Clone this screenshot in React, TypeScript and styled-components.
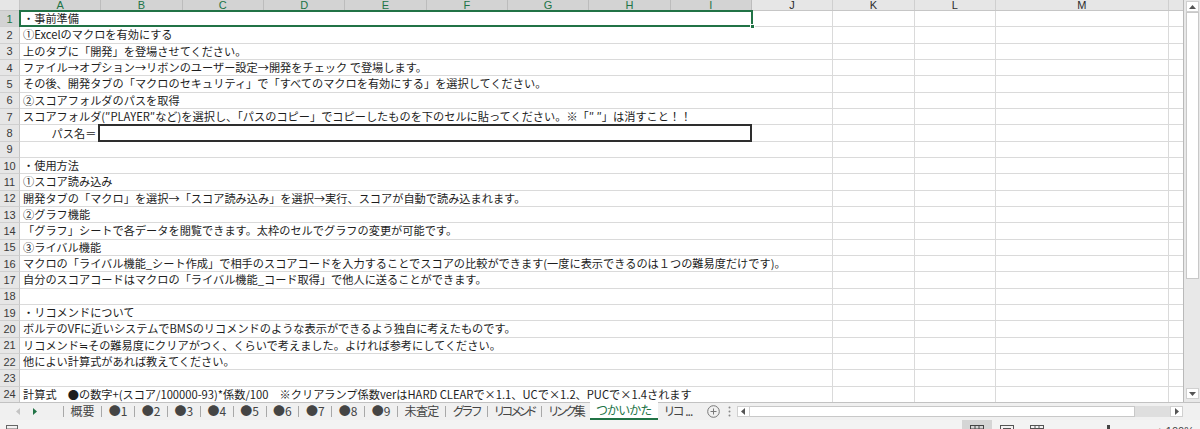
import { Fragment } from "react";
import styled, { createGlobalStyle } from "styled-components";

const GlobalStyle = createGlobalStyle`
  html, body {
    margin: 0;
    padding: 0;
    overflow: hidden;
    background: #ffffff;
  }
  body {
    font-family: "Noto Sans CJK JP", "Noto Sans", sans-serif;
  }
`;

const ROW_H = 16.33;
const COL_W = 81.33;
const GREEN = "#217346";

type RowData = { text?: string; path?: boolean };

const rows: RowData[] = [
  { text: "・事前準備" },
  { text: "①Excelのマクロを有効にする" },
  { text: "上のタブに「開発」を登場させてください。" },
  { text: "ファイル→オプション→リボンのユーザー設定→開発をチェック で登場します。" },
  { text: "その後、開発タブの「マクロのセキュリティ」で「すべてのマクロを有効にする」を選択してください。" },
  { text: "②スコアフォルダのパスを取得" },
  {
    text: "スコアフォルダ(″PLAYER″など)を選択し、「パスのコピー」でコピーしたものを下のセルに貼ってください。※「″ ″」は消すこと！！",
  },
  { path: true },
  {},
  { text: "・使用方法" },
  { text: "①スコア読み込み" },
  { text: "開発タブの「マクロ」を選択→「スコア読み込み」を選択→実行、スコアが自動で読み込まれます。" },
  { text: "②グラフ機能" },
  { text: "「グラフ」シートで各データを閲覧できます。太枠のセルでグラフの変更が可能です。" },
  { text: "③ライバル機能" },
  {
    text: "マクロの「ライバル機能_シート作成」で相手のスコアコードを入力することでスコアの比較ができます(一度に表示できるのは１つの難易度だけです)。",
  },
  { text: "自分のスコアコードはマクロの「ライバル機能_コード取得」で他人に送ることができます。" },
  {},
  { text: "・リコメンドについて" },
  { text: "ボルテのVFに近いシステムでBMSのリコメンドのような表示ができるよう独自に考えたものです。" },
  { text: "リコメンド≒その難易度にクリアがつく、くらいで考えました。よければ参考にしてください。" },
  { text: "他によい計算式があれば教えてください。" },
  {},
  {
    text: "計算式　●の数字+(スコア/100000-93)*係数/100　※クリアランプ係数verはHARD CLEARで×1.1、UCで×1.2、PUCで×1.4されます",
  },
  {},
];

const mainCols = ["A", "B", "C", "D", "E", "F", "G", "H", "I"];
const sideCols = [
  { name: "J", width: COL_W },
  { name: "K", width: COL_W },
  { name: "L", width: COL_W },
  { name: "M", width: 173 },
  { name: "", width: 15 },
];

const tabs = [
  { label: "概要" },
  { label: "●1" },
  { label: "●2" },
  { label: "●3" },
  { label: "●4" },
  { label: "●5" },
  { label: "●6" },
  { label: "●7" },
  { label: "●8" },
  { label: "●9" },
  { label: "未査定", ls: -0.6 },
  { label: "グラフ", kana: true, ls: -1.3 },
  { label: "リコメンド", kana: true, ls: -2.4 },
  { label: "リンク集", kana: true, ls: -2 },
];

const Window = styled.div`
  width: 1200px;
  height: 429px;
  display: flex;
  flex-direction: column;
  overflow: hidden;
  background: #ffffff;
`;

const Main = styled.div`
  display: flex;
  height: 403px;
  flex: none;
  border-bottom: 1px solid #c2c2c2;
  box-sizing: border-box;
`;

const Sheet = styled.div`
  width: 1184px;
  flex: none;
  display: flex;
  flex-direction: column;
  overflow: hidden;
  border-right: 1px solid #b9b9b9;
  box-sizing: border-box;
`;

const HeaderRow = styled.div`
  display: flex;
  height: 11px;
  flex: none;
  background: #e6e6e6;
  border-bottom: 1px solid #c6c6c6;
  box-sizing: border-box;
`;

const Corner = styled.div`
  width: 20px;
  flex: none;
  border-right: 1px solid #c6c6c6;
  box-sizing: border-box;
`;

const ColHeader = styled.div<{ $w: number; $sel?: boolean }>`
  width: ${(p) => p.$w}px;
  flex: none;
  box-sizing: border-box;
  border-right: 1px solid ${(p) => (p.$sel ? "#bcbcbc" : "#cfcfcf")};
  background: ${(p) => (p.$sel ? "#d3d3d3" : "#e6e6e6")};
  color: ${(p) => (p.$sel ? GREEN : "#2b2b2b")};
  font-family: "Liberation Sans", Arial, sans-serif;
  font-size: 11px;
  line-height: 10px;
  text-align: center;
  overflow: hidden;
`;

const Row = styled.div`
  display: flex;
  height: ${ROW_H}px;
  flex: none;
`;

const RowHeader = styled.div<{ $sel?: boolean }>`
  width: 20px;
  flex: none;
  box-sizing: border-box;
  display: flex;
  align-items: center;
  justify-content: center;
  background: ${(p) => (p.$sel ? "#d3d3d3" : "#e6e6e6")};
  color: ${(p) => (p.$sel ? GREEN : "#3a3a3a")};
  border-right: 1px solid #c6c6c6;
  border-bottom: 1px solid #d0d0d0;
  font-family: "Liberation Sans", Arial, sans-serif;
  font-size: 11px;
`;

const MainCell = styled.div<{ $sel?: boolean; $flush?: boolean }>`
  width: ${COL_W * 9}px;
  flex: none;
  box-sizing: border-box;
  display: flex;
  align-items: center;
  padding-left: ${(p) => (p.$flush ? 0 : 3)}px;
  border-bottom: 1px solid #dadada;
  position: relative;
  ${(p) =>
    p.$sel &&
    `
    &::after {
      content: "";
      position: absolute;
      left: -1px;
      top: -1px;
      right: -1px;
      bottom: -1px;
      border: 2px solid ${GREEN};
      z-index: 3;
    }
    &::before {
      content: "";
      position: absolute;
      right: -3px;
      bottom: -3px;
      width: 5px;
      height: 5px;
      background: ${GREEN};
      border: 1px solid #ffffff;
      box-sizing: border-box;
      z-index: 4;
    }
  `}
`;

const CellText = styled.span`
  position: relative;
  z-index: 2;
  font-size: 11.2px;
  line-height: 13px;
  color: #1d1d1d;
  white-space: nowrap;
  background: #ffffff;
  padding-right: 1px;
`;

const PathLabel = styled.div`
  width: ${COL_W - 3}px;
  flex: none;
  text-align: right;
  padding-right: 2px;
  box-sizing: border-box;
  font-size: 11.2px;
  color: #1d1d1d;
  white-space: nowrap;
`;

const PathBox = styled.div`
  flex: 1;
  align-self: stretch;
  margin-top: -1px;
  margin-bottom: -1px;
  border: 2px solid #2e2e2e;
  background: #ffffff;
  position: relative;
  z-index: 2;
`;

const Cell = styled.div<{ $w: number }>`
  width: ${(p) => p.$w}px;
  flex: none;
  box-sizing: border-box;
  border-right: 1px solid #dadada;
  border-bottom: 1px solid #dadada;
`;

const VScroll = styled.div`
  flex: 1;
  display: flex;
  flex-direction: column;
  align-items: center;
  background: #e8e8e8;
  padding: 1px 0 3px;
  box-sizing: border-box;
`;

const ScrollBtn = styled.div`
  width: 13px;
  height: 11px;
  flex: none;
  display: flex;
  align-items: center;
  justify-content: center;
  background: #ffffff;
  border: 1px solid #d0d0d0;
  box-sizing: border-box;
`;

const VThumb = styled.div`
  width: 13px;
  height: 267px;
  flex: none;
  background: #ffffff;
  border: 1px solid #c8c8c8;
  box-sizing: border-box;
`;

const VTrack = styled.div`
  flex: 1;
`;

const TabBar = styled.div`
  display: flex;
  align-items: stretch;
  height: 17px;
  flex: none;
  background: #f0f0f0;
  font-family: "Noto Sans CJK JP", "Noto Sans", sans-serif;
  font-size: 12px;
`;

const NavArea = styled.div`
  width: 63px;
  flex: none;
  display: flex;
  align-items: center;
  padding-left: 16px;
  gap: 13px;
  box-sizing: border-box;
`;

const Sep = styled.div`
  width: 1px;
  height: 11px;
  flex: none;
  align-self: center;
  background: #a8a8a8;
`;

const Tab = styled.div<{ $active?: boolean; $kana?: boolean; $ls?: number }>`
  flex: none;
  padding: 0 ${(p) => (p.$active ? 6 : 6.6)}px;
  line-height: 16px;
  color: ${(p) => (p.$active ? GREEN : "#444444")};
  background: ${(p) => (p.$active ? "#ffffff" : "transparent")};
  border-bottom: 2px solid ${(p) => (p.$active ? GREEN : "transparent")};
  margin-top: ${(p) => (p.$active ? "-1px" : "0")};
  font-feature-settings: ${(p) => (p.$kana ? '"palt"' : "normal")};
  letter-spacing: ${(p) => p.$ls ?? 0}px;
  white-space: nowrap;
`;

const TabTools = styled.div`
  display: flex;
  align-items: center;
  gap: 8px;
  padding: 0 6px 0 8px;
  flex: none;
`;

const HScroll = styled.div`
  flex: 1;
  height: 11px;
  align-self: center;
  display: flex;
  margin-right: 17px;
`;

const HThumb = styled.div`
  flex: 1;
  background: #ffffff;
  border: 1px solid #c8c8c8;
  border-left: none;
  box-sizing: border-box;
`;

const HTrack = styled.div`
  width: 35px;
  flex: none;
  background: #dedede;
`;

const StatusBar = styled.div`
  height: 9px;
  flex: none;
  overflow: hidden;
  background: #f3f3f3;
`;

const StatusInner = styled.div`
  height: 22px;
  display: flex;
  align-items: center;
  padding-left: 6px;
`;

const Spacer = styled.div`
  flex: 1;
`;

const ViewBtn = styled.div<{ $active?: boolean }>`
  width: 30px;
  height: 22px;
  display: flex;
  align-items: center;
  justify-content: center;
  background: ${(p) => (p.$active ? "#d5d5d5" : "transparent")};
`;

const ZoomArea = styled.div`
  display: flex;
  align-items: center;
  margin-left: 14px;
  gap: 6px;
`;

const ZoomTrack = styled.div`
  width: 84px;
  height: 12px;
  display: flex;
  justify-content: center;
`;

const ZoomKnob = styled.div`
  width: 3px;
  height: 10px;
  background: #444444;
`;

const ZoomText = styled.span`
  font-family: "Liberation Sans", Arial, sans-serif;
  font-size: 11px;
  color: #444444;
  margin-right: 6px;
`;

const Tri = ({ dir, color = "#555" }: { dir: "up" | "down" | "left" | "right"; color?: string }) => {
  const pts = {
    up: "0,4 3.5,0 7,4",
    down: "0,0 3.5,4 7,0",
    left: "4,0 0,3.5 4,7",
    right: "0,0 4,3.5 0,7",
  }[dir];
  const vertical = dir === "up" || dir === "down";
  return (
    <svg width={vertical ? 7 : 4} height={vertical ? 4 : 7} viewBox={vertical ? "0 0 7 4" : "0 0 4 7"}>
      <polygon points={pts} fill={color} />
    </svg>
  );
};

const GridIcon = () => (
  <svg width="14" height="12" viewBox="0 0 14 12">
    <rect x="0.5" y="0.5" width="13" height="11" fill="none" stroke="#444" />
    <line x1="0.5" y1="4" x2="13.5" y2="4" stroke="#444" />
    <line x1="0.5" y1="8" x2="13.5" y2="8" stroke="#444" />
    <line x1="5" y1="0.5" x2="5" y2="11.5" stroke="#444" />
    <line x1="9" y1="0.5" x2="9" y2="11.5" stroke="#444" />
  </svg>
);

const PageIcon = () => (
  <svg width="14" height="12" viewBox="0 0 14 12">
    <rect x="0.5" y="0.5" width="13" height="11" fill="none" stroke="#555" />
    <rect x="3.5" y="3.5" width="7" height="6" fill="none" stroke="#555" />
  </svg>
);

const BreakIcon = () => (
  <svg width="14" height="12" viewBox="0 0 14 12">
    <rect x="0.5" y="0.5" width="13" height="11" fill="none" stroke="#555" />
    <line x1="0.5" y1="3.5" x2="13.5" y2="3.5" stroke="#555" />
    <line x1="5" y1="0.5" x2="5" y2="11.5" stroke="#555" />
    <line x1="9" y1="0.5" x2="9" y2="11.5" stroke="#555" />
  </svg>
);

const MacroIcon = () => (
  <svg width="12" height="12" viewBox="0 0 12 12">
    <rect x="0.5" y="0.5" width="11" height="11" fill="none" stroke="#666" />
    <line x1="0.5" y1="4" x2="11.5" y2="4" stroke="#666" />
  </svg>
);

const PlusCircle = () => (
  <svg width="13" height="13" viewBox="0 0 13 13">
    <circle cx="6.5" cy="6.5" r="5.8" fill="none" stroke="#777" />
    <line x1="3.5" y1="6.5" x2="9.5" y2="6.5" stroke="#777" />
    <line x1="6.5" y1="3.5" x2="6.5" y2="9.5" stroke="#777" />
  </svg>
);

const Dots = () => (
  <svg width="3" height="11" viewBox="0 0 3 11">
    <circle cx="1.5" cy="1.5" r="1" fill="#888" />
    <circle cx="1.5" cy="5.5" r="1" fill="#888" />
    <circle cx="1.5" cy="9.5" r="1" fill="#888" />
  </svg>
);

export default function App() {
  return (
    <>
      <GlobalStyle />
      <Window>
        <Main>
          <Sheet>
            <HeaderRow>
              <Corner />
              {mainCols.map((c) => (
                <ColHeader key={c} $w={COL_W} $sel>
                  {c}
                </ColHeader>
              ))}
              {sideCols.map((c, i) => (
                <ColHeader key={i} $w={c.width}>
                  {c.name}
                </ColHeader>
              ))}
            </HeaderRow>
            {rows.map((r, i) => (
              <Row key={i}>
                <RowHeader $sel={i === 0}>{i + 1}</RowHeader>
                <MainCell $sel={i === 0} $flush={r.path}>
                  {r.path ? (
                    <>
                      <PathLabel>パス名＝</PathLabel>
                      <PathBox />
                    </>
                  ) : (
                    r.text && <CellText>{r.text}</CellText>
                  )}
                </MainCell>
                {sideCols.map((c, j) => (
                  <Cell key={j} $w={c.width} />
                ))}
              </Row>
            ))}
          </Sheet>
          <VScroll>
            <ScrollBtn>
              <Tri dir="up" />
            </ScrollBtn>
            <VThumb />
            <VTrack />
            <ScrollBtn>
              <Tri dir="down" />
            </ScrollBtn>
          </VScroll>
        </Main>
        <TabBar>
          <NavArea>
            <Tri dir="left" color="#c4c4c4" />
            <Tri dir="right" color={GREEN} />
          </NavArea>
          <Sep />
          {tabs.map((t, i) => (
            <Fragment key={t.label}>
              <Tab $kana={t.kana} $ls={t.ls}>
                {t.label}
              </Tab>
              {i < tabs.length - 1 && <Sep />}
            </Fragment>
          ))}
          <Tab $active $kana $ls={-0.4}>
            つかいかた
          </Tab>
          <Tab $kana $ls={-1}>
            リコ ...
          </Tab>
          <TabTools>
            <PlusCircle />
            <Dots />
          </TabTools>
          <HScroll>
            <ScrollBtn>
              <Tri dir="left" />
            </ScrollBtn>
            <HThumb />
            <HTrack />
            <ScrollBtn>
              <Tri dir="right" />
            </ScrollBtn>
          </HScroll>
        </TabBar>
        <StatusBar>
          <StatusInner>
            <MacroIcon />
            <Spacer />
            <ViewBtn $active>
              <GridIcon />
            </ViewBtn>
            <ViewBtn>
              <PageIcon />
            </ViewBtn>
            <ViewBtn>
              <BreakIcon />
            </ViewBtn>
            <ZoomArea>
              <ZoomTrack>
                <ZoomKnob />
              </ZoomTrack>
              <ZoomText>+ 100%</ZoomText>
            </ZoomArea>
          </StatusInner>
        </StatusBar>
      </Window>
    </>
  );
}
